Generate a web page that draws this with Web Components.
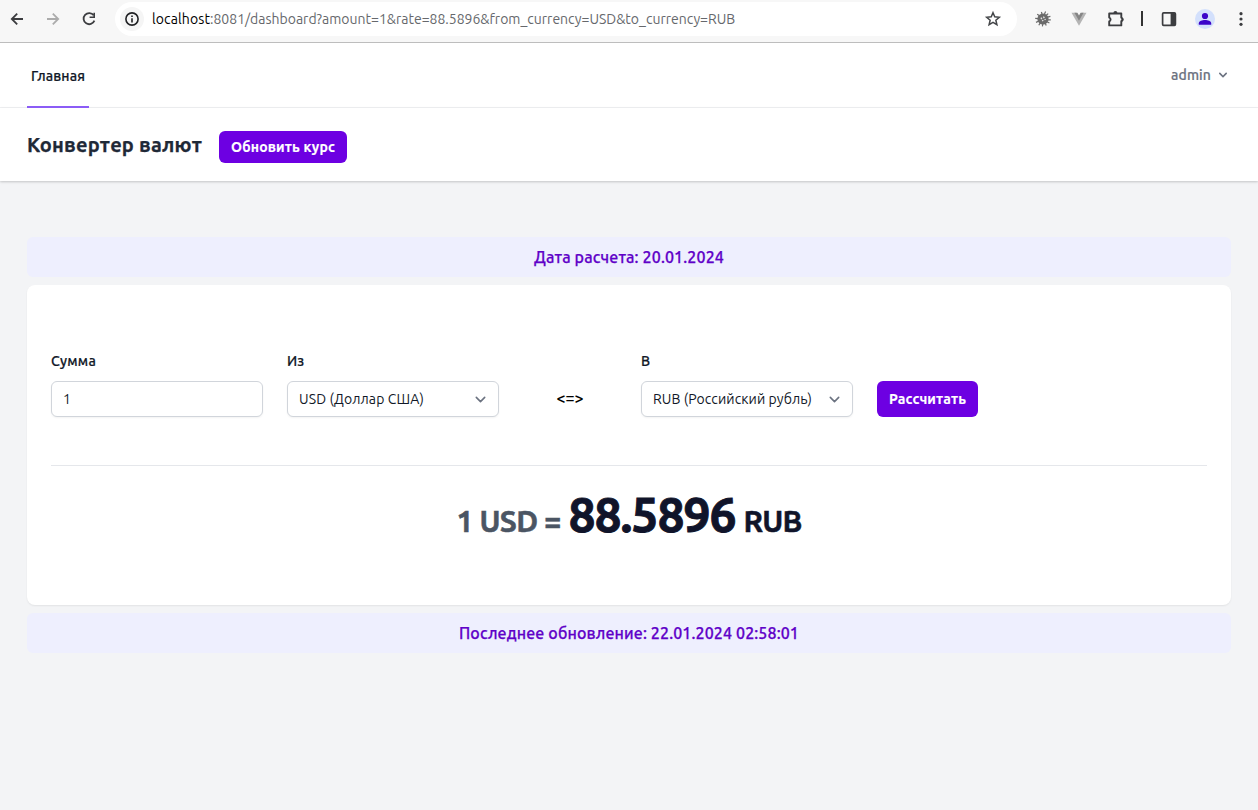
<!DOCTYPE html>
<html lang="ru">
<head>
<meta charset="utf-8">
<title>Конвертер валют</title>
<style>
html,body{margin:0;height:100%}
body{font-family:Ubuntu,"Noto Sans","Open Sans",sans-serif;background:#f3f4f6;color:#111827;overflow:hidden}
</style>
</head>
<body>
<currency-page></currency-page>
<script>
const define = (name, html, setup) => {
  const tpl = document.createElement('template');
  tpl.innerHTML = html;
  customElements.define(name, class extends HTMLElement {
    constructor() {
      super();
      this.attachShadow({mode: 'open'}).append(tpl.content.cloneNode(true));
    }
    connectedCallback() { if (setup) setup.call(this, this.shadowRoot); }
  });
};

/* One line of text whose tracking is adjusted when it does not fill the given width. */
define('fit-text', `<style>
:host{display:inline-block;white-space:pre;vertical-align:baseline}
span{display:inline-block}
</style><span><slot></slot></span>`, function (root) {
  const span = root.querySelector('span'), w = +this.getAttribute('w');
  this.style.width = w + 'px';
  const gap = (w - span.getBoundingClientRect().width) / this.textContent.length;
  if (Math.abs(gap) > 0.02) span.style.letterSpacing = gap.toFixed(3) + 'px';
});

define('browser-bar', `<style>
:host{display:flex;align-items:center;box-sizing:border-box;height:43px;padding:0 6px 5px 7px;background:#f7f7f7;border-bottom:1px solid #bdbdbd;color:#3c4043}
svg{display:block;flex:none}
.nav{display:flex;gap:16px;width:108px}
.pill{display:flex;align-items:center;box-sizing:border-box;height:34px;width:902px;margin-top:1px;background:#fff;border-radius:17px;padding:0 14px 0 5px}
.info{width:24px;height:24px;border-radius:50%;background:#f5f5f5;display:grid;place-items:center;margin-right:8px}
.url{flex:1;font-size:14px;line-height:20px;color:#66686c;white-space:nowrap;display:flex}
.host{color:#000}
.tools{display:flex;align-items:center;flex:1;height:20px;margin-left:16px}
.tools svg:not(:last-child){margin-right:16px}
.bar{width:2px;height:15px;background:#333;margin:0 16px 0 0}
</style>
<div class="nav">
<svg width="20" height="20" viewBox="0 0 20 20" fill="none" stroke="#3c3d40" stroke-width="1.8"><path d="M16 10H5M10.2 4.6 4.8 10l5.4 5.4"/></svg>
<svg width="20" height="20" viewBox="0 0 20 20" fill="none" stroke="#acacac" stroke-width="1.8"><path d="M4 10h11M9.8 4.6l5.4 5.4-5.4 5.4"/></svg>
<svg width="20" height="20" viewBox="0 0 20 20"><path d="M14.7 6.3A5.6 5.6 0 1 0 15.4 11.7" fill="none" stroke="#3c3d40" stroke-width="1.8"/><path d="M16 3.7v5.4h-5.4V7.5h3.8V3.7z" fill="#3c3d40"/></svg>
</div>
<div class="pill">
<div class="info"><svg width="14" height="14" viewBox="0 0 14 14"><circle cx="7" cy="7" r="6.1" fill="none" stroke="#202124" stroke-width="1.6"/><path d="M6.2 6.2h1.6v4.3H6.2zM6.2 3.5h1.6v1.6H6.2z" fill="#202124"/></svg></div>
<div class="url"><fit-text class="host" w="58">localhost</fit-text><fit-text w="525">:8081/dashboard?amount=1&amp;rate=88.5896&amp;from_currency=USD&amp;to_currency=RUB</fit-text></div>
<svg width="20" height="20" viewBox="0 0 20 20" fill="none" stroke="#444649" stroke-width="1.5"><path d="m10 3.7 1.75 4.15 4.55.4-3.45 3 1.05 4.45L10 13.35 6.1 15.7l1.05-4.45-3.45-3 4.55-.4z"/></svg>
</div>
<div class="tools">
<svg width="20" height="20" viewBox="0 0 20 20"><g stroke="#6b6b6b" fill="none"><path d="m4.2 5.2 2.4 1.6M8.4 3 9 5M12.6 2.6 11.5 5M15.2 4.6 13 6.5M17.4 7.4l-3 .8M17.8 10.8h-3M16.4 14l-2.4-1.2M13.2 16.4 12.2 14M9.4 17.4l.4-2.6M5.8 16.2l1.5-2.4M3 13.4l3-1.4M2.2 9.3l3.2.3" stroke-width="1.2"/></g><circle cx="10" cy="10" r="5.6" fill="#6b6b6b"/><path d="m7.9 8.6 2.2 3.6M10.4 7.6l2 3.4" stroke="#e3e3e3" stroke-width="1.3" stroke-dasharray="1.8 1"/></svg>
<svg width="20" height="20" viewBox="0 0 20 20"><path d="M2.5 3.8h4.8L10 8.6l2.7-4.8h4.8L10 16.8z" fill="#b5b5b5"/><path d="M5.4 3.8h3l1.6 2.7 1.6-2.7h3L10 11.8z" fill="#858585"/></svg>
<svg width="22" height="20" viewBox="0 0 22 20" style="margin-right:14px"><path d="M4.2 4.5h12.1v4.2a1.8 1.8 0 0 1 0 3.4v4.3H4.2v-4a2 2 0 0 0 0-3.8z" fill="none" stroke="#3c3d40" stroke-width="1.9" stroke-linejoin="round"/><path d="M8.4 4a2 2 0 0 1 4 0zM16.6 8.4a2 2 0 0 1 0 4z" fill="#3c3d40"/></svg>
<div class="bar"></div>
<svg width="20" height="20" viewBox="0 0 20 20"><rect x="3.6" y="3.9" width="12.8" height="12.4" rx="1" fill="none" stroke="#3c3d40" stroke-width="1.7"/><path d="M11.6 4H17v12h-5.4z" fill="#3c3d40"/></svg>
<svg width="20" height="20" viewBox="0 0 20 20"><circle cx="10" cy="10" r="10" fill="#d3e0fc"/><circle cx="10" cy="7" r="3.1" fill="#3b04c9"/><path d="M3.8 15.8v-1.5c0-2 3.5-3.2 6.2-3.2s6.2 1.2 6.2 3.2v1.5z" fill="#3b04c9"/></svg>
<svg width="20" height="20" viewBox="0 0 20 20" fill="#3c3d40"><circle cx="10" cy="4.7" r="1.6"/><circle cx="10" cy="10" r="1.6"/><circle cx="10" cy="15.3" r="1.6"/></svg>
</div>`);

define('app-nav', `<style>
:host{display:flex;justify-content:space-between;box-sizing:border-box;height:65px;padding:0 27px;background:#fff;border-bottom:1px solid #f0f1f3;font-size:14px;font-weight:500;line-height:20px;-webkit-text-stroke:.2px}
.tab{box-sizing:border-box;height:65px;border-bottom:2px solid #8b5cf6;padding:23px 4px 0}
.user{display:flex;height:20px;margin-top:22px;color:#6b7280}
svg{margin:2px 0 0 4px}
</style>
<div class="tab"><fit-text w="54">Главная</fit-text></div>
<div class="user"><fit-text w="40">admin</fit-text><svg width="16" height="16" viewBox="0 0 20 20" fill="#6b7280"><path fill-rule="evenodd" d="M5.293 7.293a1 1 0 011.414 0L10 10.586l3.293-3.293a1 1 0 111.414 1.414l-4 4a1 1 0 01-1.414 0l-4-4a1 1 0 010-1.414z"/></svg></div>`);

define('ui-button', `<style>
:host{display:inline-flex;align-items:center;box-sizing:border-box;height:var(--h,36px);padding:0 12px;border-radius:6px;background:#6d00e2;color:#fff;font-size:14px;font-weight:700;line-height:20px;-webkit-text-stroke:.15px}
</style><slot></slot>`);

define('page-header', `<style>
:host{display:flex;box-sizing:border-box;height:73px;padding:23px 27px 0;background:#fff;box-shadow:0 1px 3px rgba(0,0,0,.1),0 1px 2px rgba(0,0,0,.1);gap:17px}
h2{margin:0;font-size:20px;line-height:28px;font-weight:700;color:#1f2937;-webkit-text-stroke:.25px}
ui-button{--h:32px}
</style><h2><fit-text w="175">Конвертер валют</fit-text></h2><ui-button><fit-text w="104">Обновить курс</fit-text></ui-button>`);

define('info-banner', `<style>
:host{display:flex;align-items:center;justify-content:center;height:40px;border-radius:6px;background:#eeeffe;color:#6001c8;font-size:16px;font-weight:500;line-height:24px;-webkit-text-stroke:.25px}
</style><slot></slot>`);

define('form-field', `<style>
:host{display:block;width:212px;font-size:14px;line-height:20px}
label{display:block;font-weight:500;height:20px;margin-bottom:10px;color:#111827;-webkit-text-stroke:.2px}
.box{display:flex;align-items:center;justify-content:space-between;box-sizing:border-box;height:36px;border:1px solid #d1d5db;border-radius:6px;padding:0 7px 0 11px;background:#fff;box-shadow:0 1px 2px rgba(0,0,0,.05)}
svg{display:none}
:host([select]) svg{display:block}
</style>
<label><slot name="label"></slot></label>
<div class="box"><slot></slot><svg width="21" height="21" viewBox="0 0 20 20" fill="none" stroke="#6b7280" stroke-width="1.5" stroke-linecap="round" stroke-linejoin="round"><path d="m6 8 4 4 4-4"/></svg></div>`);

define('rate-result', `<style>
:host{display:flex;align-items:baseline;justify-content:center;height:60px;font-weight:700;font-size:30px;line-height:60px;color:#10142a;-webkit-text-stroke:.5px}
.from{color:#4b5563;margin-right:8px}
.rate{font-size:48px;margin-right:8px;-webkit-text-stroke:.9px}
</style><fit-text class="from" w="104">1 USD =</fit-text><fit-text class="rate" w="167">88.5896</fit-text><fit-text w="58">RUB</fit-text>`);

define('converter-card', `<style>
:host{display:block;box-sizing:border-box;height:320px;padding:66px 24px 0;background:#fff;border-radius:8px;box-shadow:0 1px 2px rgba(0,0,0,.07)}
.row{display:flex;gap:24px;align-items:flex-end;height:66px}
.swap{width:94px;text-align:center;font-size:16px;font-weight:500;line-height:20px;padding-bottom:9px;color:#000}
hr{border:0;border-top:1px solid #e5e7eb;margin:48px 0 18px}
</style>
<div class="row">
<form-field><fit-text slot="label" w="45">Сумма</fit-text><fit-text w="8">1</fit-text></form-field>
<form-field select><fit-text slot="label" w="17">Из</fit-text><fit-text w="125">USD (Доллар США)</fit-text></form-field>
<div class="swap"><fit-text w="27">&lt;=&gt;</fit-text></div>
<form-field select><fit-text slot="label" w="9">В</fit-text><fit-text w="159">RUB (Российский рубль)</fit-text></form-field>
<ui-button><fit-text w="77">Рассчитать</fit-text></ui-button>
</div>
<hr>
<rate-result></rate-result>`);

define('currency-page', `<style>
:host{display:block;height:810px}
main{display:grid;gap:8px;padding:56px 27px 0}
</style>
<browser-bar></browser-bar>
<app-nav></app-nav>
<page-header></page-header>
<main>
<info-banner><fit-text w="190">Дата расчета: 20.01.2024</fit-text></info-banner>
<converter-card></converter-card>
<info-banner><fit-text w="340">Последнее обновление: 22.01.2024 02:58:01</fit-text></info-banner>
</main>`);
</script>
</body>
</html>
